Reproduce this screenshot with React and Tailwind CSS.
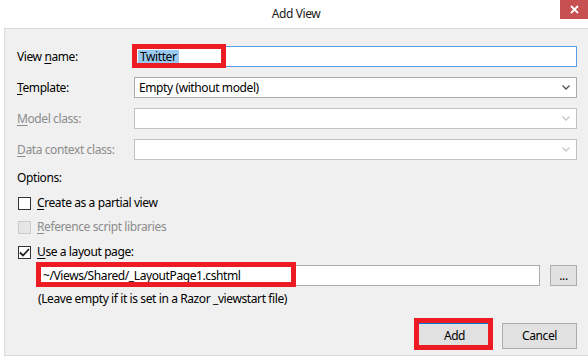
import React from "react";

const font = { fontFamily: '"Noto Sans", "Open Sans", sans-serif' };

const Chevron = ({ disabled }) => (
  <svg width="8" height="5" viewBox="0 0 8 5" className="shrink-0">
    <path
      d="M0.5 0.5 L4 4 L7.5 0.5"
      fill="none"
      stroke={disabled ? "#c4c4c4" : "#505050"}
      strokeWidth="1.3"
    />
  </svg>
);

const Select = ({ value, disabled }) => (
  <div
    className={`h-[21px] flex items-center justify-between pl-[4px] pr-[6px] bg-white border ${
      disabled ? "border-[#c2c2c2]" : "border-[#acacac]"
    }`}
  >
    <span className="text-black leading-none">{value}</span>
    <Chevron disabled={disabled} />
  </div>
);

const Label = ({ k, rest, disabled }) => (
  <span className={disabled ? "text-[#8c8c8c]" : "text-black"}>
    <span className="underline underline-offset-2">{k}</span>
    {rest}
  </span>
);

const Check = ({ checked, disabled, children }) => (
  <div className="h-[16px] flex items-center">
    <div
      className={`ml-[1px] w-[13px] h-[13px] border flex items-center justify-center ${
        disabled ? "border-[#cbcbcb] bg-[#e6e6e6]" : "border-[#333333] bg-white"
      }`}
    >
      {checked && (
        <svg width="11" height="9" viewBox="0 0 11 9">
          <path d="M1 4.5 L4 7.5 L10 1" fill="none" stroke="#222" strokeWidth="1.8" />
        </svg>
      )}
    </div>
    <span className="ml-[6px]">{children}</span>
  </div>
);

export default function App() {
  return (
    <div
      className="w-[588px] h-[359px] bg-white relative overflow-hidden text-[12px] tracking-[-0.4px] text-black"
      style={font}
    >
      {/* title bar */}
      <div className="h-[28px] relative flex items-center justify-center pl-[4px]">
        <span className="text-[12px] text-[#1a1a1a]">Add View</span>
        <div className="absolute right-0 top-0 w-[28px] h-[19px] bg-[#c75050] flex items-center justify-center">
          <svg width="9" height="9" viewBox="0 0 9 9">
            <path d="M1 1 L8 8 M8 1 L1 8" stroke="white" strokeWidth="1.8" />
          </svg>
        </div>
      </div>

      {/* body */}
      <div className="ml-[4px] h-[328px] border-t border-l border-b border-[#dadada] bg-[#f0f0f0] pl-[12px] pr-[11px] pt-[17px] flex flex-col">
        <div className="grid grid-cols-[117px_1fr] gap-y-[10px] items-center">
          <Label k="" rest={<>View <span className="underline underline-offset-2">n</span>ame:</>} />
          <div className="h-[21px] flex items-center bg-white border border-[#569de5] pl-[3px]">
            <span className="bg-[#99c9ef] px-[2px] leading-[14px]">Twitter</span>
          </div>

          <Label k="T" rest="emplate:" />
          <Select value="Empty (without model)" />

          <Label k="M" rest="odel class:" disabled />
          <Select value="" disabled />

          <Label k="D" rest="ata context class:" disabled />
          <Select value="" disabled />
        </div>

        <div className="mt-[10px] h-[16px] flex items-center">Options:</div>

        <div className="mt-[9px]">
          <Check>
            <Label k="C" rest="reate as a partial view" />
          </Check>
        </div>
        <div className="mt-[8px]">
          <Check disabled>
            <Label k="R" rest="eference script libraries" disabled />
          </Check>
        </div>
        <div className="mt-[9px]">
          <Check checked>
            <Label k="U" rest="se a layout page:" />
          </Check>
        </div>

        <div className="mt-[5px] ml-[20px] flex items-center gap-[10px]">
          <div className="flex-1 h-[21px] bg-white border border-[#acacac] flex items-center pl-[5px]">
            ~/Views/Shared/_LayoutPage1.cshtml
          </div>
          <button className="w-[27px] h-[21px] bg-[#e1e1e1] border border-[#adadad] flex items-end justify-center pb-[3px] leading-none">
            ...
          </button>
        </div>

        <div className="mt-[5px] ml-[21px] h-[16px] flex items-center">
          (Leave empty if it is set in a Razor _viewstart file)
        </div>

        <div className="mt-[16px] flex justify-end gap-[10px]">
          <button className="w-[75px] h-[26px] bg-[#e1e1e1] border border-[#0078d7]">Add</button>
          <button className="w-[75px] h-[26px] bg-[#e1e1e1] border border-[#adadad]">Cancel</button>
        </div>
      </div>

      {/* red annotation boxes */}
      <div className="absolute left-[132px] top-[44px] w-[94px] h-[24px] border-[5px] border-[#ed1c24]" />
      <div className="absolute left-[36px] top-[262px] w-[260px] h-[25px] border-[5px] border-[#ed1c24]" />
      <div className="absolute left-[414px] top-[318px] w-[79px] h-[32px] border-[5px] border-[#ed1c24]" />
    </div>
  );
}
